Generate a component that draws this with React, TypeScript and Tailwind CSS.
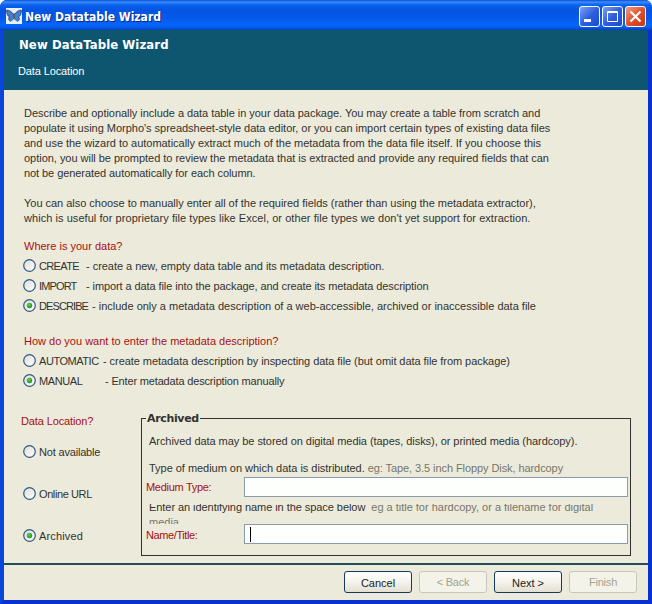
import type { ReactNode } from "react";

function Radio({ checked = false }: { checked?: boolean }) {
  return (
    <svg width="13" height="13" viewBox="0 0 13 13" className="shrink-0">
      <defs>
        <linearGradient id="radioFill" x1="0" y1="0" x2="1" y2="1">
          <stop offset="0" stopColor="#dcdcd6" />
          <stop offset="1" stopColor="#ffffff" />
        </linearGradient>
        <radialGradient id="radioDot" cx="0.4" cy="0.35" r="0.7">
          <stop offset="0" stopColor="#5fd25c" />
          <stop offset="1" stopColor="#1a8f1a" />
        </radialGradient>
      </defs>
      <circle cx="6.5" cy="6.5" r="5.8" fill="url(#radioFill)" stroke="#33587f" strokeWidth="1.2" />
      {checked && <circle cx="6.5" cy="6.5" r="2.7" fill="url(#radioDot)" />}
    </svg>
  );
}

function Option({ checked, className = "h-5", children }: { checked?: boolean; className?: string; children: ReactNode }) {
  return (
    <div className={`flex items-center gap-[3px] pb-px whitespace-pre ${className}`}>
      <Radio checked={checked} />
      <span className="flex h-[13px] items-center pt-0.5">{children}</span>
    </div>
  );
}

function Butterfly() {
  return (
    <svg width="16" height="16" viewBox="0 0 16 16" className="mb-0.5 bg-[#e9f0fb]">
      <path d="M7.6 6.5 C6 3.5 3 1.8 0.6 2.2 C0.6 5.5 1.4 8 3.4 8.8 C2 10.5 3 13 4.6 13.4 C6.4 13.4 7.4 11.5 7.6 9.5Z" fill="#3f80d6" />
      <path d="M8.4 6.5 C10 3.5 13 1.8 15.4 2.2 C15.4 5.5 14.6 8 12.6 8.8 C14 10.5 13 13 11.4 13.4 C9.6 13.4 8.6 11.5 8.4 9.5Z" fill="#3f80d6" />
      <path d="M0.6 2.2 C0.6 5.5 1.4 8 3.4 8.8 C2 10.5 3 13 4.6 13.4 M15.4 2.2 C15.4 5.5 14.6 8 12.6 8.8 C14 10.5 13 13 11.4 13.4 M0.6 2.2 C3 2 5.5 3.5 7.6 6.5 M15.4 2.2 C13 2 10.5 3.5 8.4 6.5" fill="none" stroke="#33435f" strokeWidth="0.9" />
      <path d="M8 5.5V11.5" stroke="#4a4038" strokeWidth="1.4" />
    </svg>
  );
}

function CaptionButton({ red = false, children }: { red?: boolean; children: ReactNode }) {
  return (
    <div
      className={`flex size-[21px] items-center justify-center rounded-[3px] border border-white bg-linear-to-br ${
        red ? "from-[#f09a80] via-[#e0502c] to-[#c13a12]" : "from-[#7f9ff2] via-[#2f5fe0] to-[#1a49cf]"
      }`}
    >
      {children}
    </div>
  );
}

function DialogButton({ disabled = false, children }: { disabled?: boolean; children: ReactNode }) {
  return (
    <div
      className={`flex h-[22px] w-[68px] items-center justify-center rounded-[3px] border ${
        disabled
          ? "border-[#c9c7ba] bg-[#f4f3ea] pt-px tracking-[-0.2px] text-[#a3a293]"
          : "border-[#173a5c] bg-linear-to-b from-white via-[#f4f3ec] to-[#e3e0d3] pt-[3px] text-[#222]"
      }`}
    >
      {children}
    </div>
  );
}

export default function App() {
  return (
    <div className="flex h-[604px] w-[652px] flex-col overflow-hidden rounded-t-[7px] bg-[#0a3bd8] font-['Liberation_Sans',Arial,sans-serif] text-[11px] leading-[15px] text-[#33332e]">
      <div className="flex h-[30px] shrink-0 items-center bg-[linear-gradient(to_bottom,#0a4fd0_0,#3a8cff_2px,#0a62ee_5px,#0554e2_10px,#0559ea_18px,#0566fb_25px,#0456e4_28px,#0340c0_30px)] pt-1 pr-[6px] pl-[6px]">
        <Butterfly />
        <span className="ml-[3px] whitespace-nowrap font-['DejaVu_Sans_Condensed','DejaVu_Sans',sans-serif] text-[12px] font-bold text-white [text-shadow:1px_1px_0_#0a2a80]">New Datatable Wizard</span>
        <div className="ml-auto flex gap-[2px] pb-px">
          <CaptionButton>
            <svg width="19" height="19"><path d="M4 13.5h7" stroke="white" strokeWidth="3" /></svg>
          </CaptionButton>
          <CaptionButton>
            <svg width="19" height="19"><path d="M4.5 4.5h10v10h-10zM4 5.5h11" fill="none" stroke="white" /></svg>
          </CaptionButton>
          <CaptionButton red>
            <svg width="19" height="19"><path d="M4.5 4.5l10 10M14.5 4.5l-10 10" stroke="white" strokeWidth="2.2" /></svg>
          </CaptionButton>
        </div>
      </div>
      <div className="flex min-h-0 grow flex-col border-x-4 border-t-0 border-b-4 border-r-[#0831d0] border-b-[#0831d0] border-l-[#0a46dc] bg-[#eceadb]">
        <header className="h-[60px] shrink-0 bg-[#0e5670] pl-[14px] text-white">
          <h1 className="pt-[7px] pl-px font-['DejaVu_Sans_Condensed','DejaVu_Sans',sans-serif] text-[13px] leading-[15px] font-bold tracking-[0.08px]">New DataTable Wizard</h1>
          <p className="pt-3 tracking-[-0.12px]">Data Location</p>
        </header>
        <main className="h-[473px] shrink-0 pt-4">
          <div className="pl-5 whitespace-pre">
            <p className="tracking-[-0.045px]">Describe and optionally include a data table in your data package. You may create a table from scratch and</p>
            <p className="tracking-[-0.02px]">populate it using Morpho's spreadsheet-style data editor, or you can import certain types of existing data files</p>
            <p className="tracking-[-0.025px]">and use the wizard to automatically extract much of the metadata from the data file itself. If you choose this</p>
            <p className="tracking-[-0.025px]">option, you will be prompted to review the metadata that is extracted and provide any required fields that can</p>
            <p className="tracking-[-0.07px]">not be generated automatically for each column.</p>
            <p className="pt-[15px] tracking-[-0.025px]">You can also choose to manually enter all of the required fields (rather than using the metadata extractor),</p>
            <p className="tracking-[0.055px]">which is useful for proprietary file types like Excel, or other file types we don't yet support for extraction.</p>
          </div>
          <div className="pt-[13px] pl-[19px]">
            <p className="h-[17px] pl-px text-[#a81010]">Where is your data?</p>
            <Option><span className="w-[47px] tracking-[-0.65px]">CREATE</span><span className="tracking-[-0.03px]">- create a new, empty data table and its metadata description.</span></Option>
            <Option><span className="w-[47px] tracking-[-0.85px]">IMPORT</span><span className="tracking-[-0.09px]">- import a data file into the package, and create its metadata description</span></Option>
            <Option checked><span className="w-[53px] tracking-[-0.9px]">DESCRIBE</span><span>- include only a metadata description of a web-accessible, archived or inaccessible data file</span></Option>
            <p className="mt-[18px] h-[17px] pl-px text-[#a81010]">How do you want to enter the metadata description?</p>
            <Option><span className="w-[64px] tracking-[-0.45px]">AUTOMATIC</span><span className="tracking-[-0.06px]">- create metadata description by inspecting data file (but omit data file from package)</span></Option>
            <Option checked><span className="w-[66px] tracking-[-0.4px]">MANUAL</span><span className="tracking-[-0.16px]">- Enter metadata description manually</span></Option>
          </div>
          <div className="mt-[23px] flex pl-[17px]">
            <div className="w-[120px] shrink-0">
              <p className="h-[23px] tracking-[-0.12px] text-[#a81010]">Data Location?</p>
              <Option className="ml-0.5 h-[30px] tracking-[-0.18px]">Not available</Option>
              <Option className="mt-3 ml-0.5 h-[30px] tracking-[-0.4px]">Online URL</Option>
              <Option checked className="mt-3 ml-0.5 h-[30px] tracking-[0.15px]">Archived</Option>
            </div>
            <fieldset className="mt-[-3px] h-[145px] w-[490px] border border-[#33332e] whitespace-pre">
              <legend className="ml-1 h-[15px] px-px font-['DejaVu_Sans',sans-serif] text-[11px] font-bold tracking-[-0.35px]">Archived</legend>
              <p className="mt-2 ml-[7px] tracking-[-0.05px]">Archived data may be stored on digital media (tapes, disks), or printed media (hardcopy).</p>
              <p className="mt-3 ml-[7px] tracking-[-0.03px]">Type of medium on which data is distributed.<span className="ml-[3px] tracking-[-0.08px] text-[#77766c]">eg: Tape, 3.5 inch Floppy Disk, hardcopy</span></p>
              <div className="mt-px flex h-5 items-center pl-1">
                <span className="w-[98px] pt-px tracking-[-0.3px] text-[#a81010]">Medium Type:</span>
                <div className="h-5 w-[384px] border border-[#8a99ab] bg-[#fdfffd]" />
              </div>
              <div className="mt-[7px] ml-[7px] h-5 overflow-hidden">
                <p className="mt-[-4px] h-[15px] tracking-[-0.06px]">Enter an identifying name in the space below<span className="ml-[6px] tracking-[-0.01px] text-[#77766c]">eg a title for hardcopy, or a filename for digital</span></p>
                <p className="h-[15px] text-[#77766c]">media</p>
              </div>
              <div className="flex h-5 items-center pl-1">
                <span className="w-[98px] pt-0.5 tracking-[-0.4px] text-[#a81010]">Name/Title:</span>
                <div className="flex h-5 w-[384px] items-center border border-[#8a99ab] bg-[#fdfffd] pl-[5px]"><i className="h-[15px] w-px bg-black" /></div>
              </div>
            </fieldset>
          </div>
        </main>
        <footer className="flex h-[37px] items-center justify-end gap-[7px] border-t-2 border-[#255059] pr-[11px] pb-px">
          <DialogButton>Cancel</DialogButton>
          <DialogButton disabled>&lt; Back</DialogButton>
          <DialogButton>Next &gt;</DialogButton>
          <DialogButton disabled>Finish</DialogButton>
        </footer>
      </div>
    </div>
  );
}
